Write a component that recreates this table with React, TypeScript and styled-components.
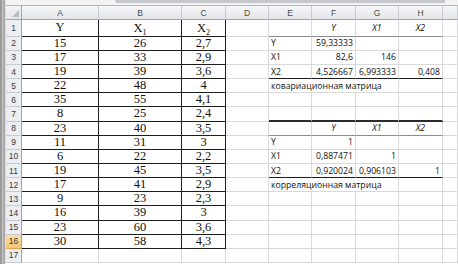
import React from "react";
import styled, { createGlobalStyle } from "styled-components";

const GlobalStyle = createGlobalStyle`
  html, body {
    margin: 0;
    padding: 0;
    background: #ffffff;
    overflow: hidden;
  }
  #root {
    width: 458px;
    height: 264px;
  }
`;

type Edge = "grid" | "thin" | "dark" | "thick";
type Align = "left" | "center" | "right";

interface CellSpec {
  text?: React.ReactNode;
  align?: Align;
  italic?: boolean;
  span?: number;
}

const COLUMNS = ["A", "B", "C", "D", "E", "F", "G", "H", ""];

const source: [number, number, string][] = [
  [15, 26, "2,7"],
  [17, 33, "2,9"],
  [19, 39, "3,6"],
  [22, 48, "4"],
  [35, 55, "4,1"],
  [8, 25, "2,4"],
  [23, 40, "3,5"],
  [11, 31, "3"],
  [6, 22, "2,2"],
  [19, 45, "3,5"],
  [17, 41, "2,9"],
  [9, 23, "2,3"],
  [16, 39, "3"],
  [23, 60, "3,6"],
  [30, 58, "4,3"],
];

const head = (t: string): CellSpec => ({ text: t, align: "center", italic: true });
const label = (t: string): CellSpec => ({ text: t, align: "left" });
const num = (t: string): CellSpec => ({ text: t, align: "right" });

// E..H for each row of the two matrices
const matrices: Record<number, CellSpec[]> = {
  1: [{}, head("Y"), head("X1"), head("X2")],
  2: [label("Y"), num("59,33333"), {}, {}],
  3: [label("X1"), num("82,6"), num("146"), {}],
  4: [label("X2"), num("4,526667"), num("6,993333"), num("0,408")],
  5: [{ text: "ковариационная матрица", align: "left", span: 3 }, {}],
  8: [{}, head("Y"), head("X1"), head("X2")],
  9: [label("Y"), num("1"), {}, {}],
  10: [label("X1"), num("0,887471"), num("1"), {}],
  11: [label("X2"), num("0,920024"), num("0,906103"), num("1")],
  12: [{ text: "корреляционная матрица", align: "left", span: 3 }, {}],
};

const matrixEdge: Record<number, Edge> = {
  1: "thin",
  4: "dark",
  7: "thick",
  8: "thin",
  11: "dark",
};

export default function App() {
  const rows = Array.from({ length: 17 }, (_, i) => i + 1);

  return (
    <Page>
      <GlobalStyle />
      <SideStrip />
      <Main>
        <TopBar>
          <TopTab />
        </TopBar>
        <Sheet>
          <Corner />
          {COLUMNS.map((c, i) => (
            <ColHeader key={i}>{c}</ColHeader>
          ))}

          {rows.map((r) => {
            const framed = r <= 16;
            let abc: React.ReactNode[];
            if (r === 1) {
              abc = [
                "Y",
                <Var>X<Sub>1</Sub></Var>,
                <Var>X<Sub>2</Sub></Var>,
              ];
            } else if (r <= 16) {
              const [y, x1, x2] = source[r - 2];
              abc = [y, x1, x2];
            } else {
              abc = ["", "", ""];
            }
            const right = matrices[r] ?? [{}, {}, {}, {}];
            const edge = matrixEdge[r] ?? "grid";

            return (
              <React.Fragment key={r}>
                <RowHeader $selected={r === 16}>{r}</RowHeader>
                {abc.map((v, i) => (
                  <Cell
                    key={"abc" + i}
                    $serif
                    $align="center"
                    $framed={framed}
                    $bottom={framed ? "dark" : "grid"}
                  >
                    {v}
                  </Cell>
                ))}
                <Cell />
                {right.map((s, i) => (
                  <Cell
                    key={"m" + i}
                    $align={s.align}
                    $italic={s.italic}
                    $span={s.span}
                    $bottom={edge}
                  >
                    {s.text}
                  </Cell>
                ))}
                <Cell />
              </React.Fragment>
            );
          })}
        </Sheet>
      </Main>
    </Page>
  );
}

const Page = styled.div`
  display: flex;
  width: 458px;
  height: 264px;
  overflow: hidden;
  background: #ffffff;
`;

const SideStrip = styled.div`
  flex: 0 0 6px;
  background: linear-gradient(
    to right,
    #9a9a9a 0 2px,
    #c9c9c9 2px 3px,
    #a9a9a9 3px 5px,
    #dedede 5px 6px
  );
`;

const Main = styled.div`
  flex: 1;
  display: flex;
  flex-direction: column;
  min-width: 0;
`;

const TopBar = styled.div`
  box-sizing: border-box;
  height: 6px;
  background: #f3f3f3;
  border-bottom: 1px solid #b4b4b4;
`;

const TopTab = styled.div`
  margin-left: 109px;
  width: 330px;
  height: 3px;
  background: #c3c6ca;
  border-bottom-left-radius: 4px;
`;

const Sheet = styled.div`
  display: grid;
  grid-template-columns: 16px 77px 83px 44px 43px 43px 44px 43px 44px 1fr;
  grid-template-rows: 14px 16.7px repeat(16, 14.15px);
`;

const headerFont = `"Liberation Sans", Arial, sans-serif`;

const Corner = styled.div`
  box-sizing: border-box;
  position: relative;
  background: linear-gradient(#f4f5f7, #e4e6e9);
  border-right: 1px solid #9fa4aa;
  border-bottom: 1px solid #9fa4aa;

  &::after {
    content: "";
    position: absolute;
    right: 2px;
    bottom: 2px;
    width: 7px;
    height: 7px;
    background: #b9bcc0;
    clip-path: polygon(100% 0, 100% 100%, 0 100%);
  }
`;

const ColHeader = styled.div`
  box-sizing: border-box;
  display: flex;
  align-items: center;
  justify-content: center;
  background: linear-gradient(#f6f7f9, #e3e5e8);
  border-right: 1px solid #c8ccd1;
  border-bottom: 1px solid #9fa4aa;
  font-family: ${headerFont};
  font-size: 8.5px;
  color: #4a4a4a;
`;

const RowHeader = styled.div<{ $selected?: boolean }>`
  box-sizing: border-box;
  display: flex;
  align-items: center;
  justify-content: center;
  background: ${(p) =>
    p.$selected ? "linear-gradient(#f9dca4, #f3c778)" : "#eceef1"};
  border-right: 1px solid #9fa4aa;
  border-bottom: 1px solid ${(p) => (p.$selected ? "#e0a84a" : "#c8ccd1")};
  font-family: ${headerFont};
  font-size: 8.5px;
  color: #3a3a3a;
`;

const edgeStyle: Record<Edge, string> = {
  grid: "1px solid #d9d9d9",
  thin: "1px solid #8c8c8c",
  dark: "1px solid #1c1c1c",
  thick: "2px solid #2a2a2a",
};

const Cell = styled.div<{
  $serif?: boolean;
  $align?: Align;
  $italic?: boolean;
  $framed?: boolean;
  $bottom?: Edge;
  $span?: number;
}>`
  box-sizing: border-box;
  display: flex;
  align-items: center;
  justify-content: ${(p) =>
    p.$align === "right"
      ? "flex-end"
      : p.$align === "center"
        ? "center"
        : "flex-start"};
  grid-column: span ${(p) => p.$span ?? 1};
  min-width: 0;
  padding: 0 2px;
  border-right: 1px solid ${(p) => (p.$framed ? "#1c1c1c" : "#d9d9d9")};
  border-bottom: ${(p) => edgeStyle[p.$bottom ?? "grid"]};
  white-space: nowrap;
  color: #111111;
  font-family: ${(p) =>
    p.$serif
      ? `"Liberation Serif", "Times New Roman", serif`
      : `"Open Sans", "Liberation Sans", sans-serif`};
  font-size: ${(p) => (p.$serif ? "12.5px" : "8.7px")};
  font-style: ${(p) => (p.$italic ? "italic" : "normal")};
`;

const Var = styled.span`
  display: inline-block;
  line-height: 1;
`;

const Sub = styled.sub`
  font-size: 8px;
  line-height: 0;
  vertical-align: -3px;
`;
